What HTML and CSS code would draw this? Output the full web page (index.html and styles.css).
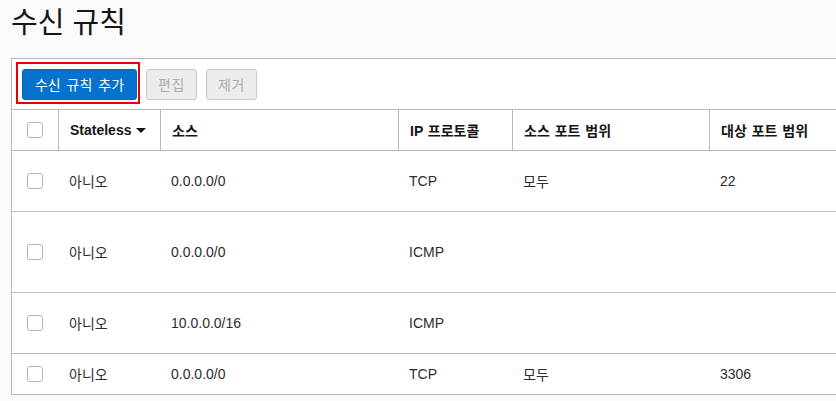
FILE: index.html
```html
<!DOCTYPE html>
<html lang="ko">
<head>
<meta charset="utf-8">
<title>수신 규칙</title>
<link rel="stylesheet" href="styles.css">
</head>
<body>
<div class="page">
  <h1 class="title">수신 규칙</h1>
  <div class="panel">
    <div class="toolbar">
      <span class="highlight"><button class="btn btn-primary">수신 규칙 추가</button></span>
      <button class="btn btn-disabled">편집</button>
      <button class="btn btn-disabled">제거</button>
    </div>
    <div class="grid">
      <div class="hcell cb-cell"><span class="checkbox"></span></div>
      <div class="hcell">Stateless <span class="caret"></span></div>
      <div class="hcell">소스</div>
      <div class="hcell">IP 프로토콜</div>
      <div class="hcell">소스 포트 범위</div>
      <div class="hcell">대상 포트 범위</div>

      <div class="cell cb-cell r60"><span class="checkbox"></span></div>
      <div class="cell r60">아니오</div>
      <div class="cell r60">0.0.0.0/0</div>
      <div class="cell r60">TCP</div>
      <div class="cell r60">모두</div>
      <div class="cell r60">22</div>

      <div class="cell cb-cell r80"><span class="checkbox"></span></div>
      <div class="cell r80">아니오</div>
      <div class="cell r80">0.0.0.0/0</div>
      <div class="cell r80">ICMP</div>
      <div class="cell r80"></div>
      <div class="cell r80"></div>

      <div class="cell cb-cell r60"><span class="checkbox"></span></div>
      <div class="cell r60">아니오</div>
      <div class="cell r60">10.0.0.0/16</div>
      <div class="cell r60">ICMP</div>
      <div class="cell r60"></div>
      <div class="cell r60"></div>

      <div class="cell cb-cell r40"><span class="checkbox"></span></div>
      <div class="cell r40">아니오</div>
      <div class="cell r40">0.0.0.0/0</div>
      <div class="cell r40">TCP</div>
      <div class="cell r40">모두</div>
      <div class="cell r40">3306</div>
    </div>
  </div>
</div>
</body>
</html>
```

FILE: styles.css
```css
html, body {
  margin: 0;
  padding: 0;
  background: #fafafa;
  overflow: hidden;
}
body {
  font-family: "Liberation Sans", "Noto Sans CJK KR", sans-serif;
  color: #333;
  font-size: 14px;
}
.page {
  padding-left: 11px;
  width: 1000px;
}
.title {
  margin: 0;
  padding-top: 0;
  height: 56px;
  box-sizing: border-box;
  font-size: 29px;
  font-weight: 400;
  line-height: 40px;
  color: #161513;
  font-family: "Noto Sans CJK KR", "Liberation Sans", sans-serif;
}
.panel {
  border-top: 1px solid #b6babf;
  border-left: 1px solid #b6babf;
  background: #fff;
  margin-top: 2px;
}
.toolbar {
  display: flex;
  align-items: flex-start;
  padding: 3px 0 5px 4px;
  border-bottom: 1px solid #b6babf;
}
.highlight {
  display: inline-block;
  border: 2px solid #e8000b;
  padding: 5px 1px 2px 4px;
}
.btn {
  font-family: "Noto Sans CJK KR", "Liberation Sans", sans-serif;
  font-size: 14px;
  height: 31px;
  padding: 0;
  border-radius: 3px;
  box-sizing: border-box;
  line-height: 29px;
  display: block;
  word-spacing: 2px;
}
.btn-primary {
  background: #0572ce;
  border: 1px solid #0466b8;
  color: #fff;
  width: 115px;
}
.btn-disabled {
  background: #ececec;
  border: 1px solid #c9c9c9;
  color: #acacac;
  margin-top: 7px;
  width: 51px;
  letter-spacing: 0.5px;
}
.btn-disabled + .btn-disabled { margin-left: 9px; }
.highlight + .btn-disabled { margin-left: 6px; }
.grid {
  display: grid;
  grid-template-columns: 46px 102px 238px 114px 197px 260px;
}
.hcell {
  height: 40px;
  border-bottom: 1px solid #b6babf;
  border-left: 1px solid #b6babf;
  display: flex;
  align-items: center;
  padding-left: 11px;
  font-weight: 700;
  color: #161513;
  font-size: 14px;
  word-spacing: 1px;
}
.hcell:first-child { border-left: none; }
.cell {
  box-sizing: border-box;
  border-bottom: 1px solid #b6babf;
  display: flex;
  align-items: center;
  padding-left: 11px;
  padding-bottom: 1px;
  color: #2d2d2d;
}
.cb-cell {
  padding-left: 15px;
}
.r60 { height: 61px; }
.r80 { height: 81px; }
.r40 { height: 41px; }
.checkbox {
  display: block;
  width: 14px;
  height: 14px;
  border: 1px solid #b4b4b4;
  border-radius: 3px;
  background: #fff;
}
.caret {
  display: inline-block;
  width: 0;
  height: 0;
  border-left: 5px solid transparent;
  border-right: 5px solid transparent;
  border-top: 5px solid #161513;
  margin-left: 5px;
  margin-top: 1px;
}
```
